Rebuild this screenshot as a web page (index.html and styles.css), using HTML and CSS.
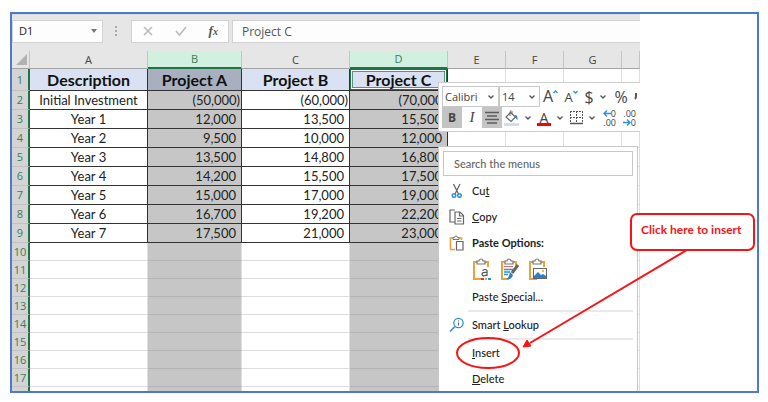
FILE: index.html
```html
<!DOCTYPE html>
<html lang="en">
<head>
<meta charset="utf-8">
<title>Project comparison</title>
<link rel="stylesheet" href="styles.css">
</head>
<body>
<main class="frame">
  <div class="sheet">
    <div class="formula-bar">
      <div class="name-box">
        <input type="text" value="D1" aria-label="Name box">
        <svg width="8" height="5" viewBox="0 0 8 5"><path d="M1 0h6L4 4z" fill="#777"/></svg>
      </div>
      <svg class="grip" width="4" height="12" viewBox="0 0 4 12" fill="#aaa"><rect x="1" y="1" width="2" height="2"/><rect x="1" y="5" width="2" height="2"/><rect x="1" y="9" width="2" height="2"/></svg>
      <div class="entry-tools">
        <button type="button" aria-label="Cancel"><svg width="12" height="12" viewBox="0 0 12 12"><path d="M2 2l8 8M10 2l-8 8" stroke="#b8b8b8" stroke-width="1.5"/></svg></button>
        <button type="button" aria-label="Enter"><svg width="14" height="12" viewBox="0 0 14 12"><path d="M2 6l3.500 4L12 2" fill="none" stroke="#bbb" stroke-width="1.700"/></svg></button>
        <button type="button" class="fx" aria-label="Insert function">f<small>x</small></button>
      </div>
      <input class="formula" type="text" value="Project C" aria-label="Formula">
    </div>
    <table class="grid">
      <colgroup><col class="w-head"><col class="w-a"><col class="w-b"><col class="w-c"><col class="w-d"><col class="w-e"><col class="w-e"><col class="w-e"><col></colgroup>
      <thead>
        <tr><th class="corner"><svg width="11" height="11" viewBox="0 0 11 11"><path d="M11 0v11H0z" fill="#b2b2b2"/></svg></th><th>A</th><th class="on">B</th><th>C</th><th class="on">D</th><th>E</th><th>F</th><th>G</th><th></th></tr>
      </thead>
      <tbody>
        <tr class="title"><th>1</th><td>Description</td><td class="sel">Project A</td><td>Project B</td><td class="active">Project C</td><td></td><td></td><td></td><td></td></tr>
        <tr class="data"><th>2</th><td>Initial Investment</td><td class="sel neg">(50,000)</td><td class="neg">(60,000)</td><td class="sel neg">(70,000)</td><td></td><td></td><td></td><td></td></tr>
        <tr class="data"><th>3</th><td>Year 1</td><td class="sel">12,000</td><td>13,500</td><td class="sel">15,500</td><td></td><td></td><td></td><td></td></tr>
        <tr class="data"><th>4</th><td>Year 2</td><td class="sel">9,500</td><td>10,000</td><td class="sel">12,000</td><td></td><td></td><td></td><td></td></tr>
        <tr class="data"><th>5</th><td>Year 3</td><td class="sel">13,500</td><td>14,800</td><td class="sel">16,800</td><td></td><td></td><td></td><td></td></tr>
        <tr class="data"><th>6</th><td>Year 4</td><td class="sel">14,200</td><td>15,500</td><td class="sel">17,500</td><td></td><td></td><td></td><td></td></tr>
        <tr class="data"><th>7</th><td>Year 5</td><td class="sel">15,000</td><td>17,000</td><td class="sel">19,000</td><td></td><td></td><td></td><td></td></tr>
        <tr class="data"><th>8</th><td>Year 6</td><td class="sel">16,700</td><td>19,200</td><td class="sel">22,200</td><td></td><td></td><td></td><td></td></tr>
        <tr class="data"><th>9</th><td>Year 7</td><td class="sel">17,500</td><td>21,000</td><td class="sel">23,000</td><td></td><td></td><td></td><td></td></tr>
        <tr><th>10</th><td></td><td class="sel"></td><td></td><td class="sel"></td><td></td><td></td><td></td><td></td></tr>
        <tr><th>11</th><td></td><td class="sel"></td><td></td><td class="sel"></td><td></td><td></td><td></td><td></td></tr>
        <tr><th>12</th><td></td><td class="sel"></td><td></td><td class="sel"></td><td></td><td></td><td></td><td></td></tr>
        <tr><th>13</th><td></td><td class="sel"></td><td></td><td class="sel"></td><td></td><td></td><td></td><td></td></tr>
        <tr><th>14</th><td></td><td class="sel"></td><td></td><td class="sel"></td><td></td><td></td><td></td><td></td></tr>
        <tr><th>15</th><td></td><td class="sel"></td><td></td><td class="sel"></td><td></td><td></td><td></td><td></td></tr>
        <tr><th>16</th><td></td><td class="sel"></td><td></td><td class="sel"></td><td></td><td></td><td></td><td></td></tr>
        <tr><th>17</th><td></td><td class="sel"></td><td></td><td class="sel"></td><td></td><td></td><td></td><td></td></tr>
        <tr class="last"><th></th><td></td><td class="sel"></td><td></td><td class="sel"></td><td></td><td></td><td></td><td></td></tr>
      </tbody>
    </table>
  </div>

  <svg width="0" height="0" class="defs">
    <symbol id="chev" viewBox="0 0 8 6"><path d="M1.500 1.500L4 4l2.500-2.500" fill="none" stroke="#555" stroke-width="1.400"/></symbol>
    <symbol id="clip" viewBox="0 0 20 24"><path d="M5 4H2v17h7M13 4h3v5" fill="none" stroke="#e8a33d" stroke-width="2"/><path d="M5 6V3h2a2 2 0 0 1 4 0h2v3z" fill="#fff" stroke="#777" stroke-width="1.200"/></symbol>
  </svg>

  <div class="mini-toolbar">
    <div class="tool-row">
      <span class="pick pick-font"><select aria-label="Font"><option>Calibri</option></select><svg width="8" height="6"><use href="#chev"/></svg></span>
      <span class="pick pick-size"><select aria-label="Font size"><option>14</option></select><svg width="8" height="6"><use href="#chev"/></svg></span>
      <button type="button" class="grow" aria-label="Increase font size">A<svg width="5" height="4" viewBox="0 0 5 4"><path d="M.5 3l2-2 2 2" fill="none" stroke="#2f8fd0" stroke-width="1.300"/></svg></button>
      <button type="button" class="shrink" aria-label="Decrease font size">A<svg width="5" height="4" viewBox="0 0 5 4"><path d="M.5 1l2 2 2-2" fill="none" stroke="#2f8fd0" stroke-width="1.300"/></svg></button>
      <button type="button" class="sign">$</button>
      <button type="button" class="drop" aria-label="Currency options"><svg width="8" height="6"><use href="#chev"/></svg></button>
      <button type="button" class="sign percent">%</button>
      <button type="button" class="comma" aria-label="Comma style"><svg width="4" height="8" viewBox="0 0 4 8"><path d="M3 0v3q0 2-1 3" fill="none" stroke="#555" stroke-width="2"/></svg></button>
    </div>
    <div class="tool-row">
      <button type="button" class="pressed bold">B</button>
      <button type="button" class="italic">I</button>
      <button type="button" class="pressed" aria-label="Center"><svg width="14" height="14" viewBox="0 0 14 14"><path d="M0 1.500h14M2 5h10M0 8.500h14M2 12h10" stroke="#5c5c5c" stroke-width="1.300"/></svg></button>
      <button type="button" aria-label="Fill color"><svg width="16" height="16" viewBox="0 0 16 16"><path d="M6.500 2.500l5 4.500-4.500 4.500L2 7z" fill="#fff" stroke="#666" stroke-width="1.200"/><path d="M6 6V1.500q1.500-1.500 2 0V4" fill="none" stroke="#666"/><path d="M11 5q3 0 2.500 5-2-1-2.500-5" fill="#2f80c2"/><rect x="0" y="13" width="15" height="3" fill="#cfdcf3"/></svg></button>
      <button type="button" class="drop" aria-label="Fill color options"><svg width="8" height="6"><use href="#chev"/></svg></button>
      <button type="button" class="font-color">A</button>
      <button type="button" class="drop" aria-label="Font color options"><svg width="8" height="6"><use href="#chev"/></svg></button>
      <button type="button" aria-label="Borders"><svg width="15" height="15" viewBox="0 0 15 15" fill="none" stroke="#555"><path d="M1.500 1v12M13.500 1v12M1 1.500h13M7.500 1v12M1 7.500h13" stroke-dasharray="2 1"/><path d="M1 13.500h13" stroke-width="1.500"/></svg></button>
      <button type="button" class="drop" aria-label="Border options"><svg width="8" height="6"><use href="#chev"/></svg></button>
      <button type="button" class="decimal" aria-label="Increase decimal"><span><svg width="8" height="7" viewBox="0 0 8 7"><path d="M8 3.500H1M4 .5l-3 3 3 3" fill="none" stroke="#2f8fd0" stroke-width="1.300"/></svg>0</span><span>.00</span></button>
      <button type="button" class="decimal" aria-label="Decrease decimal"><span>.00</span><span><svg width="8" height="7" viewBox="0 0 8 7"><path d="M0 3.500h7M4 .5l3 3-3 3" fill="none" stroke="#2f8fd0" stroke-width="1.300"/></svg>0</span></button>
    </div>
  </div>

  <div class="menu">
    <input class="search" type="text" placeholder="Search the menus" aria-label="Search the menus">
    <button type="button" class="item"><svg width="16" height="16" viewBox="0 0 16 16" fill="none"><path d="M4.500 1l5 10M11 1L6 11" stroke="#666" stroke-width="1.300"/><circle cx="5" cy="12.500" r="1.800" stroke="#2f8fd0" stroke-width="1.400"/><circle cx="10.500" cy="12.500" r="1.800" stroke="#2f8fd0" stroke-width="1.400"/></svg><span>Cu<u>t</u></span></button>
    <button type="button" class="item"><svg width="16" height="16" viewBox="0 0 16 16" fill="#fff" stroke="#666" stroke-width="1.200"><path d="M6 13H1V1h5"/><path d="M6 3h5l3.500 3.500V15H6z"/><path d="M10.500 3v4h4M8 9.500h4.500M8 12h4.500" fill="none"/></svg><span><u>C</u>opy</span></button>
    <div class="item heading"><svg width="16" height="16" viewBox="0 0 16 16" fill="none"><path d="M4 3H1.500v11.500H6M10 3h2.500v2" stroke="#e8a33d" stroke-width="1.600"/><path d="M4 4.500V2.500h1.500a1.500 1.500 0 0 1 3 0H10v2z" fill="#fff" stroke="#777"/><path d="M7.500 6.500h6.500v8.500H7.500z" fill="#fff" stroke="#666" stroke-width="1.200"/></svg><span>Paste Options:</span></div>
    <div class="paste-options">
      <button type="button" aria-label="Paste"><svg width="20" height="24" viewBox="0 0 20 24"><use href="#clip" width="20" height="24"/><rect x="8" y="9" width="10" height="10" fill="#fff"/><path d="M10.500 12.500q3-2 4.500 0v5.500M15 14.500q-5-.5-5 1.700 0 2.800 5 .8" fill="none" stroke="#555" stroke-width="1.200"/><path d="M9 21h3" stroke="#d33" stroke-width="2"/><path d="M13 21h2" stroke="#e8a33d" stroke-width="2"/><path d="M16 21h3" stroke="#2f8fd0" stroke-width="2"/></svg></button>
      <button type="button" aria-label="Keep source formatting"><svg width="20" height="24" viewBox="0 0 20 24"><use href="#clip" width="20" height="24"/><path d="M4 8.500h9" stroke="#d66" /><path d="M4 11.500h9M4 14h6M4 16.500h4" stroke="#2f8fd0" stroke-width="1.500"/><path d="M18 7l-6 8" stroke="#666" stroke-width="3"/><path d="M10 14l3 3q-1 5-7 4 3-1 4-7" fill="#2f80c2"/></svg></button>
      <button type="button" aria-label="Paste as picture"><svg width="20" height="24" viewBox="0 0 20 24"><use href="#clip" width="20" height="24"/><rect x="5.500" y="10.500" width="13" height="10" fill="#fff" stroke="#666"/><path d="M6 18l4-4 3 3 2-1 3 2v2H6z" fill="#2f80c2"/><circle cx="15" cy="13" r="1" fill="#e8a33d"/></svg></button>
    </div>
    <button type="button" class="item"><span class="blank"></span><span>Paste <u>S</u>pecial...</span></button>
    <hr>
    <button type="button" class="item"><svg width="16" height="16" viewBox="0 0 16 16" fill="none" stroke="#2f8fd0"><circle cx="9.500" cy="6" r="4.700" stroke-width="1.200"/><path d="M6 9.500L1 14.500" stroke-width="1.600"/><path d="M9.500 5.500v3M9.500 3.500v1" stroke="#555"/></svg><span>Smart <u>L</u>ookup</span></button>
    <hr>
    <button type="button" class="item"><span class="blank"></span><span><u>I</u>nsert</span></button>
    <button type="button" class="item"><span class="blank"></span><span><u>D</u>elete</span></button>
  </div>

  <svg class="markup" width="260" height="150" viewBox="0 0 260 150">
    <ellipse cx="48" cy="113" rx="31" ry="15" fill="none" stroke="#f81414" stroke-width="2"/>
    <path d="M252 7L90 103" stroke="#f81414" stroke-width="2"/>
    <path d="M83 107l4-7 4 6z" fill="#f81414" stroke="#f81414"/>
  </svg>
  <p class="callout">Click here to insert</p>
</main>
</body>
</html>
```
FILE: styles.css
```css
* { box-sizing: border-box; }

body {
  margin: 0;
  padding: 12px 9px 9px 10px;
  background: #fff;
  color: #222;
  font: 11px/16px "Open Sans", sans-serif;
}

button, input, select {
  margin: 0;
  padding: 0;
  border: 0;
  background: none;
  color: inherit;
  font: inherit;
}

.frame {
  position: relative;
  overflow: hidden;
  border: 2px solid #4a7bd0;
}

.defs { position: absolute; }

.sheet { margin-right: 117px; }

/* formula bar */
.formula-bar {
  display: flex;
  align-items: center;
  height: 37px;
  padding: 5px 0 9px;
  background: #e6e6e6;
  border-top: 1px solid #dcdcdc;
}

.name-box, .entry-tools, .formula {
  height: 23px;
  background: #fdfdfd;
  border: 1px solid #d2d2d2;
}

.name-box {
  display: flex;
  align-items: center;
  width: 91px;
  padding: 0 4px 0 6px;
}

.name-box input { flex: 1; min-width: 0; }
.grip { margin: 0 13px 0 11px; }

.entry-tools {
  display: flex;
  align-items: center;
  justify-content: space-around;
  width: 98px;
}

.entry-tools button { display: flex; }
.fx { align-items: baseline; color: #555; font: italic bold 13px/16px "Liberation Serif", serif; }
.fx small { font-size: 10px; }

.formula {
  flex: 1;
  min-width: 0;
  margin-left: 3px;
  padding-left: 9px;
  border-right: 0;
  color: #555;
  font-size: 12px;
}

/* grid */
.grid {
  width: 100%;
  table-layout: fixed;
  border-collapse: separate;
  border-spacing: 0;
}

.w-head { width: 18px; }
.w-a { width: 118px; }
.w-b { width: 94px; }
.w-c { width: 108px; }
.w-d { width: 98px; }
.w-e { width: 58px; }

.grid th, .grid td {
  height: 18px;
  padding: 0;
  border: 0 solid #dedede;
  border-width: 0 1px 1px 0;
  line-height: 16px;
  white-space: nowrap;
}

.grid th { font-weight: 400; }

.grid thead th {
  background: #e6e6e6;
  border-color: #c4c4c4;
  border-bottom-color: #a3a3a3;
  color: #444;
}

.grid thead .on {
  background: #d2f0e0;
  border-bottom: 2px solid #217346;
  color: #3b7d5b;
}

.grid .corner { text-align: right; }
.corner svg { display: block; margin-left: 4px; }

.grid tbody th {
  background: #d4d4d4;
  border-right: 2px solid #217346;
  border-bottom-color: #c2c2c2;
  color: #3b7d5b;
}

.grid .sel {
  background: #c6c6c6;
  border-bottom-color: #b3b3b3;
}

.grid .title th { height: 22px; }

.grid .title td {
  font: 700 16px/20px Lato, sans-serif;
  text-align: center;
  color: #111;
}

.title td:nth-child(-n+5) { background: #d9e1f2; }
.grid .title .sel { background: #a8b0c0; }
.grid .title .active { box-shadow: inset 0 0 0 1px #217346, inset 0 0 0 2px #fff, inset 0 0 0 3px #5a9478; }

.grid .data th, .grid .data td { height: 19px; }

.grid .data td {
  padding: 1px 5px 0 0;
  font: 13px/17px Lato, sans-serif;
  text-align: right;
}

.grid .data td:nth-child(2) { padding-right: 0; text-align: center; }
.grid .data .neg { padding-right: 1px; }

.grid .title td:nth-child(-n+5),
.grid .data td:nth-child(-n+5) { border-color: #333; }

.grid .last th, .grid .last td { height: 4px; border-bottom: 0; }

/* floating format bar */
.mini-toolbar {
  position: absolute;
  top: 68px;
  left: 426px;
  width: 202px;
  overflow: hidden;
  padding: 3px 0 3px 3px;
  background: #fff;
  border: 1px solid #cecece;
  border-right: 0;
  color: #444;
}

.tool-row { display: flex; height: 21px; }
.tool-row button {
  display: flex;
  flex: none;
  align-items: center;
  justify-content: center;
  width: 20px;
}

.pick {
  display: flex;
  flex: none;
  align-items: center;
  padding: 0 3px 0 2px;
  border: 1px solid #c8c8c8;
}

.pick-font { width: 57px; }
.pick-size { width: 41px; }
.pick select { flex: 1; min-width: 0; appearance: none; }

.tool-row .drop { width: 12px; }
.tool-row .grow { align-items: flex-start; width: 21px; font-size: 16px; line-height: 20px; }
.tool-row .shrink { align-items: flex-start; font-size: 13px; line-height: 22px; }
.grow svg, .shrink svg { margin-top: 4px; }
.tool-row .sign { width: 16px; font-size: 16px; }
.tool-row .percent { width: 24px; }
.tool-row .comma { width: 4px; }
.pressed { background: #c4c4c4; }
.bold { font-weight: 700; font-size: 12px; }
.italic { font: italic 15px "Liberation Serif", serif; }

.font-color { font-size: 14px; line-height: 14px; }
.font-color::after {
  content: "";
  position: absolute;
  width: 14px;
  height: 3px;
  margin-top: 14px;
  background: #f00;
}

.tool-row .decimal {
  flex-direction: column;
  align-items: flex-end;
  padding-right: 2px;
  font-size: 9px;
  line-height: 9px;
}

.decimal span { display: flex; align-items: center; height: 9px; }

/* context menu */
.menu {
  position: absolute;
  top: 132px;
  left: 426px;
  width: 200px;
  padding: 4px;
  background: #fff;
  border: 1px solid #c8c8c8;
  font: 500 11px/16px Lato, sans-serif;
}

.search {
  display: block;
  width: 100%;
  height: 25px;
  margin-bottom: 2px;
  padding-left: 10px;
  border: 1px solid #c8c8c8;
}

.search::placeholder { color: #666; opacity: 1; }

.item {
  display: flex;
  align-items: center;
  gap: 7px;
  width: 100%;
  height: 26px;
  padding-left: 6px;
  text-align: left;
}

.item svg, .blank { flex: none; width: 16px; }
.heading { font-weight: 700; }

.paste-options {
  display: flex;
  align-items: center;
  gap: 8px;
  height: 28px;
  padding-left: 29px;
}

.paste-options button, .paste-options svg { display: block; }

.menu hr {
  height: 2px;
  margin: 0 0 0 25px;
  border: 0;
  background: #e9e9e9;
}

/* annotation */
.markup {
  position: absolute;
  top: 226px;
  left: 428px;
}

.callout {
  position: absolute;
  top: 199px;
  left: 618px;
  width: 125px;
  margin: 0;
  padding: 4px 9px 8px;
  border: 2px solid #f81414;
  border-radius: 7px;
  background: #fff;
  color: #f81414;
  font: 700 12px/22px Lato, sans-serif;
  white-space: nowrap;
}
```
